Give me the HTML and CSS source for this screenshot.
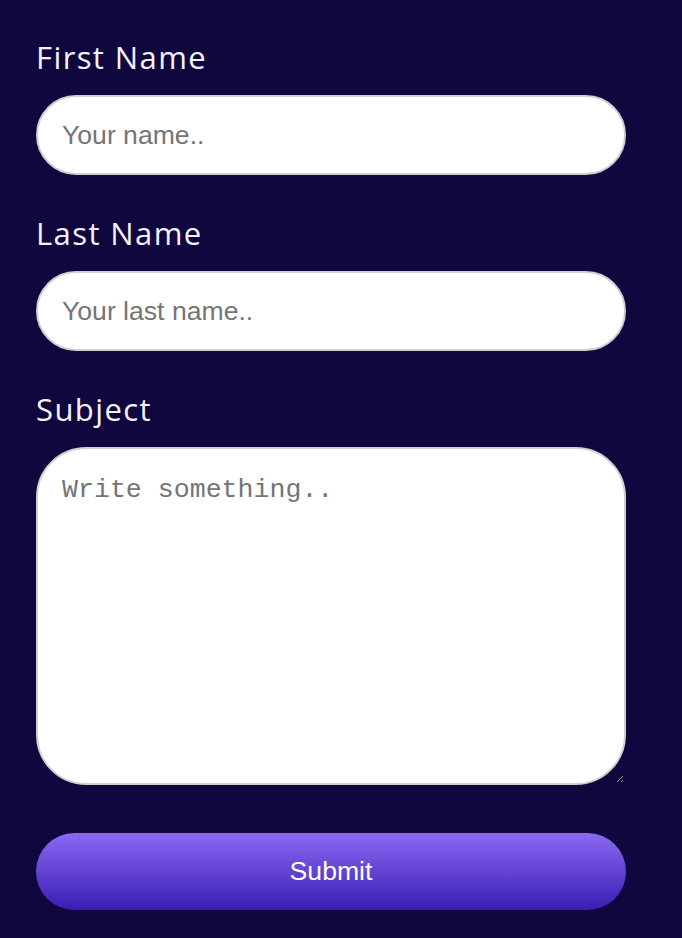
FILE: index.html
```html
<!DOCTYPE html>
<html lang="en">
<head>
<meta charset="utf-8">
<title>Contact form</title>
<link rel="stylesheet" href="styles.css">
</head>
<body>
<form class="form">
  <label class="label" for="fname">First Name</label>
  <input class="field" id="fname" type="text" placeholder="Your name..">
  <label class="label" for="lname">Last Name</label>
  <input class="field" id="lname" type="text" placeholder="Your last name..">
  <label class="label" for="subject">Subject</label>
  <textarea class="area" id="subject" placeholder="Write something.."></textarea>
  <button class="submit" type="button">Submit</button>
</form>
</body>
</html>
```
FILE: styles.css
```css
html, body {
  margin: 0;
  padding: 0;
  background: #11073f;
}
.form {
  display: flex;
  flex-direction: column;
  padding: 34px 56px 0 36px;
}
.label {
  font-family: "Open Sans", "Noto Sans", sans-serif;
  font-size: 31px;
  line-height: 46px;
  letter-spacing: 1.4px;
  color: #f4f2fb;
  margin-bottom: 15px;
}
.field {
  box-sizing: border-box;
  height: 80px;
  border: 2px solid #cfcfcf;
  border-radius: 40px;
  padding: 0 24px;
  font-family: "Liberation Sans", Arial, sans-serif;
  font-size: 26.6px;
  color: #222;
  background: #fff;
  margin: 0 0 35px;
  outline: none;
}
.field::placeholder, .area::placeholder {
  color: #757575;
}
.area {
  box-sizing: border-box;
  height: 338px;
  border: 2px solid #cfcfcf;
  border-radius: 50px;
  padding: 26px 24px;
  font-family: "Liberation Mono", "Courier New", monospace;
  font-size: 26.6px;
  background: #fff;
  margin: 0;
  outline: none;
}
.submit {
  margin-top: 48px;
  height: 77px;
  border: none;
  border-radius: 39px;
  background: linear-gradient(to bottom, #8a6af2, #3a1cb4);
  color: #fff;
  font-family: "Liberation Sans", Arial, sans-serif;
  font-size: 26.6px;
}
```
